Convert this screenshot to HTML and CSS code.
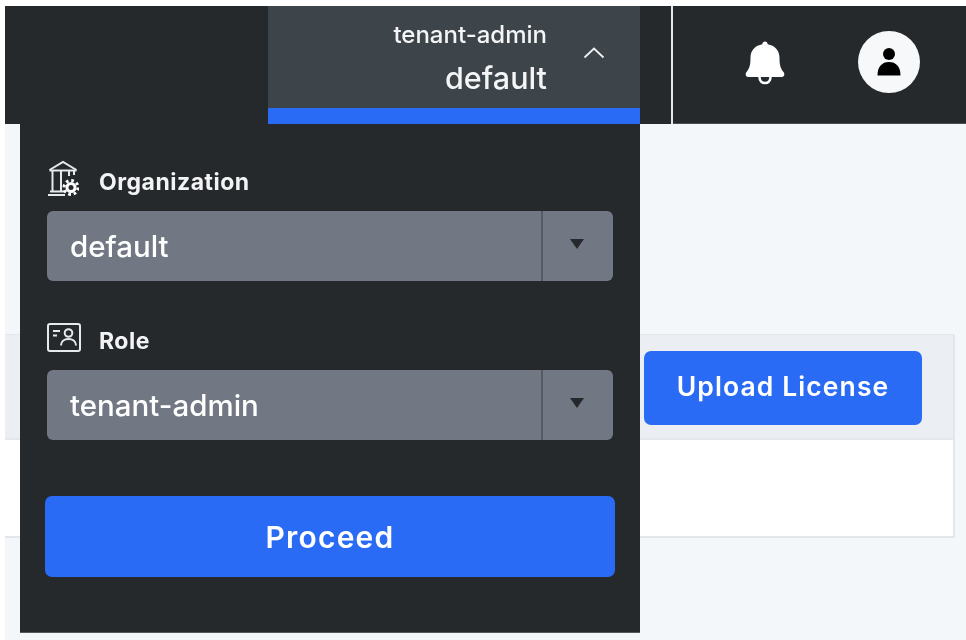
FILE: index.html
```html
<!DOCTYPE html>
<html lang="en">
<head>
    <meta charset="UTF-8">
    <title>License</title>
    <link rel="stylesheet" href="styles.css">
</head>
<body>
<div class="page">
    <header class="topbar">
        <div class="tenant_tab">
            <div class="tenant_names">
                <span class="tenant_role">tenant-admin</span>
                <span class="tenant_org">default</span>
            </div>
            <svg class="chevron" viewBox="0 0 22 12">
                <path d="M1.5,10.5L11,1.5l9.5,9"></path>
            </svg>
        </div>
        <div class="topbar_actions">
            <svg class="bell" viewBox="0 0 40 44">
                <path d="M20,0.5c1.5,0,2.5,1,2.7,2.8c7,1.2,11.8,6.2,11.8,13.2c0,7.5,1,11,4,14.5c1.6,1.9,0.8,5-1.8,5H3.3c-2.6,0-3.4-3.1-1.8-5c3-3.5,4-7,4-14.5c0-7,4.8-12,11.8-13.2C17.5,1.5,18.5,0.5,20,0.5z"></path>
                <path class="bell_clapper" d="M14.5,36c0,4,2.5,6,5.5,6s5.5-2,5.5-6"></path>
            </svg>
            <div class="avatar">
                <svg class="avatar_icon" viewBox="0 0 24 28">
                    <circle cx="12" cy="6" r="6"></circle>
                    <path d="M0.5,27.5c0-9,4.5-13.5,11.5-13.5s11.5,4.5,11.5,13.5z"></path>
                </svg>
            </div>
        </div>
    </header>

    <main class="content">
        <section class="card">
            <div class="card_head">
                <button class="btn upload_btn">Upload License</button>
            </div>
            <div class="card_body"></div>
        </section>
    </main>

    <div class="switcher">
        <div class="field org_field">
            <label class="field_label">
                <svg class="field_icon" viewBox="0 0 32 36">
                    <path d="M2.5,10L16,2l13.5,8"></path>
                    <path d="M2.5,10.5h27"></path>
                    <path d="M5.5,11v20M14,11v20M22,11v5M27,11v4"></path>
                    <path d="M3,31.5h14M1,35h17"></path>
                    <circle class="gear_teeth" cx="24" cy="27.5" r="7"></circle>
                    <circle class="gear_ring" cx="24" cy="27.5" r="4"></circle>
                </svg>
                <span class="label_text">Organization</span>
            </label>
            <div class="select">
                <span class="select_value">default</span>
                <span class="select_arrow"></span>
            </div>
        </div>
        <div class="field role_field">
            <label class="field_label">
                <svg class="field_icon" viewBox="0 0 34 30">
                    <rect x="1" y="1" width="32" height="27" rx="2"></rect>
                    <path d="M6,8h7M6,12.5h4"></path>
                    <circle cx="21.5" cy="10" r="3.8"></circle>
                    <path d="M14,22.5c0-4,3-6.5,7.5-6.5s7.5,2.500,7.5,6.5"></path>
                </svg>
                <span class="label_text">Role</span>
            </label>
            <div class="select">
                <span class="select_value">tenant-admin</span>
                <span class="select_arrow"></span>
            </div>
        </div>
        <button class="btn proceed_btn">Proceed</button>
    </div>
</div>
</body>
</html>
```

FILE: styles.css
```css
html,body{
    height: 100%;
}
body{
    margin: 0;
    background-color: #fff;
    font-family: Inter, "Liberation Sans", sans-serif;
    overflow: hidden;
}
.page{
    position: relative;
    margin: 6px 0 0 5px;
    height: 634px;
    background-color: #f4f7fa;
    filter: blur(0.5px);
}
.topbar{
    display: flex;
    height: 118px;
    padding-left: 263px;
    background-color: #25292c;
}
.tenant_tab{
    display: flex;
    justify-content: flex-end;
    width: 372px;
    box-sizing: border-box;
    padding: 15px 0 0;
    background-color: #3d454a;
    border-bottom: 16px solid #2a6bf6;
}
.tenant_names{
    display: flex;
    flex-direction: column;
    align-items: flex-end;
    color: #f4f5f6;
    font-weight: 500;
}
.tenant_role{
    font-size: 24px;
    line-height: 28px;
}
.tenant_org{
    margin-top: 11px;
    font-size: 30.5px;
    line-height: 36px;
}
.chevron{
    width: 22px;
    height: 12px;
    margin: 26px 35px 0 36px;
    fill: none;
    stroke: #f0f1f2;
    stroke-width: 1.8;
}
.topbar_actions{
    display: flex;
    align-items: center;
    flex: 1;
    margin-left: 31px;
    border-left: 2px solid #e4e6e8;
    box-shadow: inset 0 -1px 0 #4a4f54;
}
.bell{
    width: 40px;
    height: 44px;
    margin: 0 0 5px 72px;
    fill: #fff;
}
.bell_clapper{
    fill: none;
    stroke: #fff;
    stroke-width: 2.5;
}
.avatar{
    display: flex;
    align-items: center;
    justify-content: center;
    width: 62px;
    height: 62px;
    margin: 0 0 6px 73px;
    border-radius: 50%;
    background-color: #f7f8fa;
}
.avatar_icon{
    width: 24px;
    height: 28px;
}
.content{
    padding: 210px 11px 0 0;
}
.card{
    border: 2px solid #e3e6eb;
    border-left: 0;
    border-top-width: 1px;
    background-color: #fff;
}
.card_head{
    display: flex;
    justify-content: flex-end;
    height: 105px;
    box-sizing: border-box;
    padding: 16px 31px 0 0;
    background-color: #ebeef3;
    border-bottom: 2px solid #e3e6eb;
}
.card_body{
    height: 96px;
}
.btn{
    border: 0;
    border-radius: 7px;
    background-color: #2a6bf6;
    color: #fff;
    font-family: inherit;
    font-weight: 600;
}
.upload_btn{
    width: 278px;
    height: 74px;
    padding-bottom: 6px;
    font-size: 26.5px;
    letter-spacing: 1.1px;
}
/* dropdown lies over the page, hangs from the tab in the topbar */
.switcher{
    position: absolute;
    left: 15px;
    top: 118px;
    width: 620px;
    height: 509px;
    box-sizing: border-box;
    padding: 36px 25px 0 25px;
    background-color: #25292c;
    border-bottom: 1px solid #55595d;
}
.field_label{
    display: flex;
    align-items: center;
    margin-left: 2px;
    color: #f2f3f4;
    font-size: 23px;
    font-weight: 700;
    letter-spacing: 0.5px;
}
.label_text{
    margin-top: 8px;
}
.field_icon{
    flex: none;
    fill: none;
    stroke: #e8e9ea;
    stroke-width: 2;
}
.org_field .field_icon{
    width: 32px;
    height: 36px;
}
.org_field .field_label{
    gap: 20px;
    height: 36px;
}
.role_field{
    margin-top: 42px;
}
.role_field .field_icon{
    width: 34px;
    height: 30px;
}
.role_field .field_label{
    gap: 18px;
    height: 30px;
}
.role_field .label_text{
    margin-top: 5px;
}
.gear_teeth{
    stroke: #fff;
    stroke-width: 3;
    stroke-dasharray: 2.7 2.8;
}
.gear_ring{
    fill: #25292c;
    stroke: #fff;
    stroke-width: 3;
}
.select{
    display: flex;
    align-items: center;
    height: 70px;
    margin: 15px 2px 0 2px;
    border-radius: 6px;
    background-color: #727883;
}
.role_field .select{
    margin-top: 17px;
}
.select_value{
    flex: 1;
    padding: 0 0 0 23px;
    color: #fff;
    font-size: 29.5px;
    font-weight: 500;
}
.select_arrow{
    display: flex;
    align-items: center;
    justify-content: center;
    width: 72px;
    height: 100%;
    border-left: 2px solid #565b62;
    box-sizing: border-box;
    padding: 0 2px 4px 0;
}
.select_arrow::after{
    content: "";
    border-left: 7.5px solid transparent;
    border-right: 7.5px solid transparent;
    border-top: 10px solid #25292c;
}
.proceed_btn{
    display: block;
    width: 570px;
    height: 81px;
    margin-top: 56px;
    padding-bottom: 1px;
    font-size: 30px;
    letter-spacing: 1.2px;
}
```
